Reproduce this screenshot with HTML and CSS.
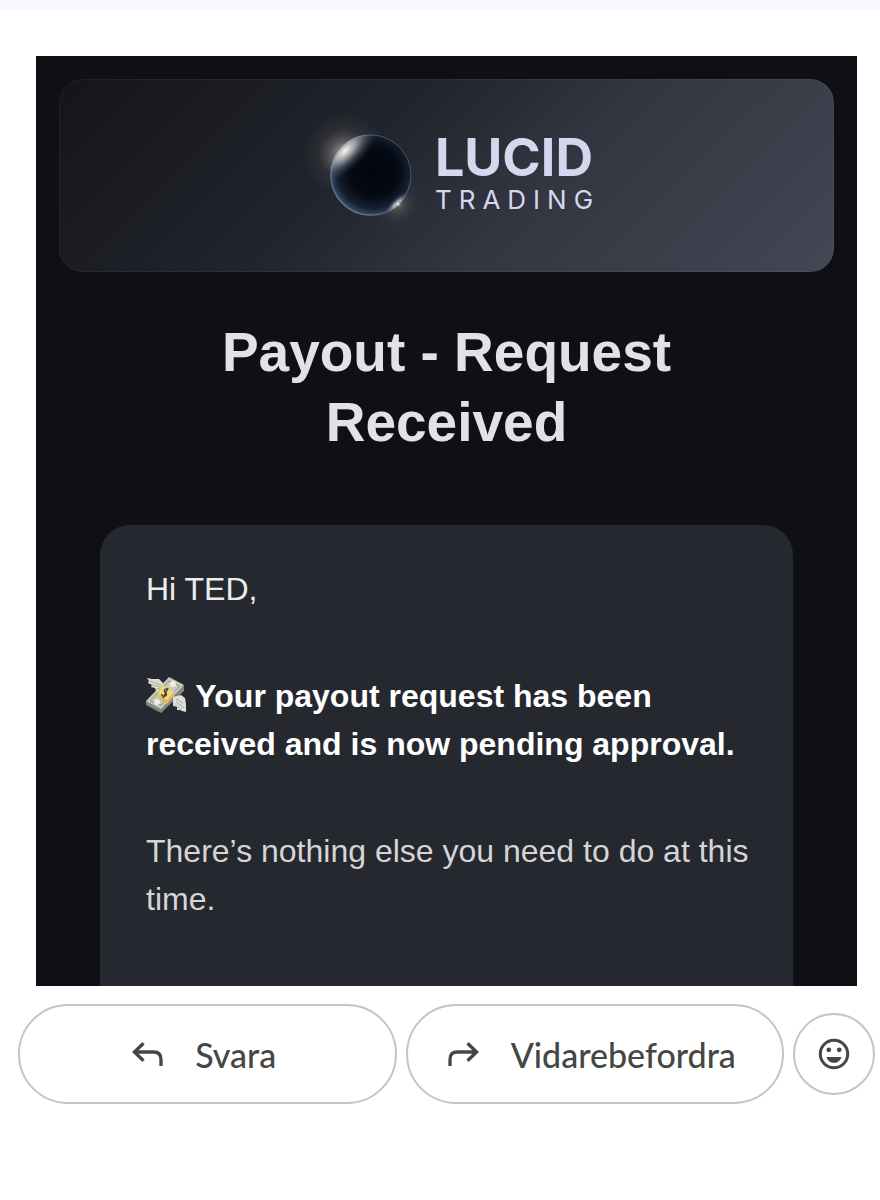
FILE: index.html
```html
<!DOCTYPE html>
<html lang="sv">
  <head>
    <meta charset="UTF-8" />
    <meta name="viewport" content="width=device-width, initial-scale=1.0" />
    <title>Payout - Request Received</title>
    <link rel="stylesheet" href="styles.css">
  </head>
  <body>
    <div class="topbar"></div>
    <main class="mail">
      <div class="banner">
        <svg class="planet" viewBox="0 0 112 116" aria-hidden="true">
          <defs>
            <radialGradient id="halo">
              <stop offset="0" stop-color="#e8dcd2" stop-opacity="0.8" />
              <stop offset="0.3" stop-color="#b5a9a2" stop-opacity="0.38" />
              <stop offset="0.6" stop-color="#9a918d" stop-opacity="0.1" />
              <stop offset="1" stop-color="#8a8584" stop-opacity="0" />
            </radialGradient>
            <radialGradient id="ball" cx="0.53" cy="0.46" r="0.56">
              <stop offset="0" stop-color="#02050b" />
              <stop offset="0.55" stop-color="#050a13" />
              <stop offset="0.8" stop-color="#152030" />
              <stop offset="0.93" stop-color="#33445f" />
              <stop offset="1" stop-color="#7186a8" />
            </radialGradient>
            <radialGradient id="shine">
              <stop offset="0" stop-color="#fffaf2" />
              <stop offset="0.3" stop-color="#d0ced0" stop-opacity="0.75" />
              <stop offset="0.65" stop-color="#7b8592" stop-opacity="0.35" />
              <stop offset="1" stop-color="#56606e" stop-opacity="0" />
            </radialGradient>
            <clipPath id="disc"><circle cx="71" cy="57" r="41" /></clipPath>
          </defs>
          <circle cx="44" cy="36" r="42" fill="url(#halo)" />
          <circle cx="97" cy="86" r="28" fill="url(#halo)" opacity="0.45" />
          <circle cx="71" cy="57" r="41" fill="url(#ball)" />
          <g clip-path="url(#disc)">
            <ellipse cx="45" cy="33" rx="42" ry="19" fill="url(#shine)" transform="rotate(-44 45 33)" />
            <ellipse cx="97" cy="86" rx="16" ry="6" fill="url(#shine)" transform="rotate(-45 97 86)" />
          </g>
          <circle cx="71" cy="57" r="40" fill="none" stroke="#8797b1" stroke-opacity="0.45" />
          <circle cx="98" cy="86" r="4" fill="url(#shine)" />
        </svg>
        <div class="brand">
          <span class="brand-name">LUCID</span>
          <span class="brand-sub">TRADING</span>
        </div>
      </div>
      <h1>Payout - Request Received</h1>
      <div class="card">
        <p class="hi">Hi TED,</p>
        <p class="lead"><svg class="money" viewBox="0 0 41 36" role="img" aria-label="Money with wings">
            <path d="M0 24l0 4 15 8 23-22 0-5z" fill="#85857f" />
            <path d="M0 24L23 0l15 8-23 24z" fill="#c9cabb" />
            <path d="M4 24L23 4l11 5-19 19z" fill="none" stroke="#8f947f" />
            <circle cx="27" cy="7" r="3" fill="#efefdf" />
            <circle cx="11" cy="25" r="3" fill="#efefdf" />
            <path d="M1 1l5 1 7 0 4 4-3 9-4-1-1-3-4-1 1-2-4-2 1-2z" fill="#dedfd4" />
            <path d="M4 4l11 4M6 8l8 2M9 12l5 0" stroke="#a8aaa0" fill="none" />
            <path d="M27 20l8-2 4 3 1 6 0 8-4-1-2-1-3 0 0-3-4-1z" fill="#dedfd4" />
            <path d="M30 22l7 4M30 25l8 6M29 28l7 5" stroke="#a8aaa0" fill="none" />
            <path d="M11 18l4-10 13 7 0 4-7 8-5-3z" fill="#dfb957" />
            <path d="M12 17l4-9 12 7-7 8z" fill="#f0d786" />
            <path d="M22 13c-2-2-5 0-3 2s2 3 0 4-4-1-3-2M22 11l-5 10" fill="none" stroke="#4c4328" stroke-width="1.500" />
          </svg> Your payout request has been received and is now pending approval.</p>
        <p>There’s nothing else you need to do at this time.</p>
      </div>
    </main>
    <div class="actions">
      <button type="button" class="pill">
        <svg class="arrow" viewBox="0 0 31 24" aria-hidden="true">
          <path d="M11.500 1.200L2.400 10l9.100 8.800M3 10h18.500q7.500 0 7.500 7.500V24" />
        </svg>
        Svara
      </button>
      <button type="button" class="pill">
        <svg class="arrow" viewBox="0 0 31 24" aria-hidden="true">
          <path d="M19.500 1.200L28.600 10l-9.100 8.800M28 10H9.500Q2 10 2 17.500V24" />
        </svg>
        Vidarebefordra
      </button>
      <button type="button" class="react" aria-label="Lägg till reaktion">
        <svg class="smile" viewBox="0 0 32 32" aria-hidden="true">
          <circle cx="16" cy="16" r="13.700" />
          <path d="M8.500 19h15c-1 3.600-4 5.800-7.500 5.800s-6.500-2.200-7.500-5.800zM13.200 11.800a2.400 2.400 0 1 1-4.800 0 2.400 2.400 0 0 1 4.800 0zM23.600 11.800a2.400 2.400 0 1 1-4.800 0 2.400 2.400 0 0 1 4.800 0z" />
        </svg>
      </button>
    </div>
  </body>
</html>
```
FILE: styles.css
```css
body {
  margin: 0;
  background: #fff;
  font-family: "Liberation Sans", Arial, sans-serif;
}

.topbar {
  height: 10px;
  background: #f8f9ff;
}

.mail {
  margin: 46px 23px 0 36px;
  padding: 23px 23px 0;
  background: #0f1015;
}

/* logo banner */
.banner {
  display: flex;
  align-items: center;
  justify-content: center;
  gap: 23px;
  padding: 38px 0 37px;
  border: 1px solid rgba(255, 255, 255, 0.05);
  border-radius: 24px;
  background: linear-gradient(135deg, #141519, #22252d 40%, #343641 62%, #444754) border-box;
}

.planet {
  width: 112px;
  height: 116px;
  overflow: visible;
}

.brand {
  display: flex;
  flex-direction: column;
  padding-bottom: 4px;
  color: #d3d8ef;
  font-family: Inter, sans-serif;
}

.brand-name {
  font-size: 52px;
  font-weight: 700;
  line-height: 52px;
}

.brand-sub {
  font-size: 26px;
  line-height: 32px;
  letter-spacing: 7px;
  margin-right: -7px;
}

h1 {
  margin: 45px 140px 68px;
  color: #e1e2e7;
  font-size: 55px;
  line-height: 70px;
  text-align: center;
}

.card {
  margin: 0 41px;
  padding: 40px 40px 63px 46px;
  border-radius: 30px 30px 0 0;
  background: #26282f;
  color: #d6d4d6;
  font-size: 32px;
  line-height: 48px;
}

.card p {
  margin: 0 0 59px;
}

.card p:last-child {
  margin-bottom: 0;
}

.card .hi {
  color: #ececef;
}

.card .lead {
  color: #fff;
  font-weight: bold;
}

.money {
  width: 41px;
  height: 36px;
  vertical-align: -6px;
}

/* reply buttons */
.actions {
  display: flex;
  align-items: center;
  gap: 9px;
  padding: 18px 5px 18px 18px;
}

.actions button {
  display: flex;
  align-items: center;
  justify-content: center;
  box-sizing: border-box;
  border: 2px solid #c4c5c5;
  background: #fff;
  color: #444746;
}

.pill {
  flex: 1;
  gap: 32px;
  height: 100px;
  padding: 0 6px 0 0;
  border-radius: 50px;
  font: 500 34px Lato, sans-serif;
}

.react {
  width: 82px;
  height: 82px;
  padding: 0;
  border-radius: 50%;
}

.arrow {
  width: 31px;
  height: 24px;
  fill: none;
  stroke: #444746;
  stroke-width: 3.3;
}

.smile {
  width: 32px;
  height: 32px;
  fill: #444746;
}

.smile circle {
  fill: none;
  stroke: #444746;
  stroke-width: 3;
}
```
